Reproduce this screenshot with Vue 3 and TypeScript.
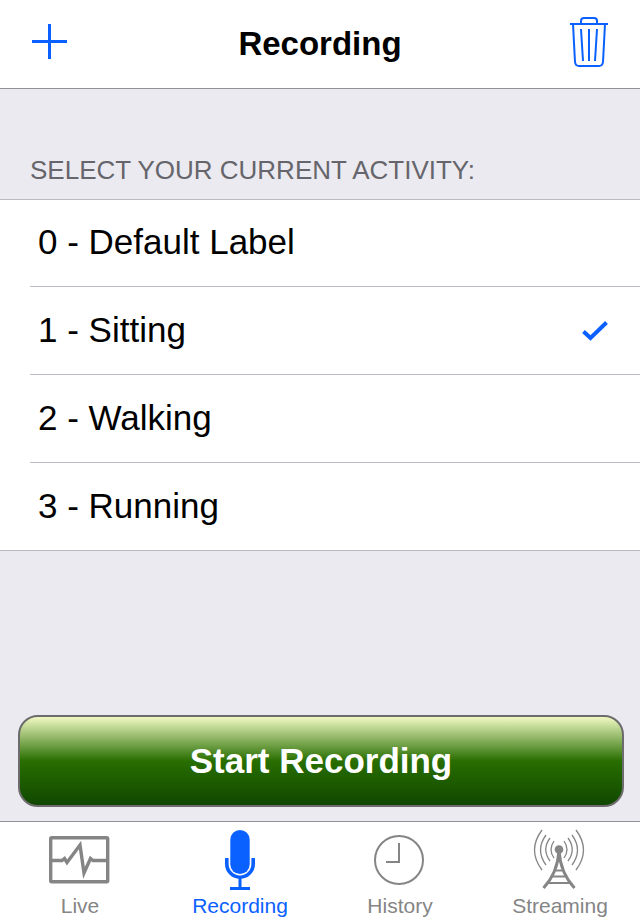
<script setup lang="ts">
import { ref } from 'vue'

const activities: string[] = ['Default Label', 'Sitting', 'Walking', 'Running']
const selected = ref<number>(1)

const tabs: string[] = ['Live', 'Recording', 'History', 'Streaming']
const activeTab = ref<string>('Recording')
</script>

<template>
  <div class="screen">
    <header class="navbar">
      <button class="nav-button" type="button" aria-label="Add activity">
        <svg width="36" height="36" viewBox="0 0 36 36">
          <path d="M0 17.5H35M17.5 0V35" fill="none" stroke="currentColor" stroke-width="3" />
        </svg>
      </button>
      <h1 class="title">Recording</h1>
      <button class="nav-button" type="button" aria-label="Delete recordings">
        <svg width="38" height="52" viewBox="0 0 38 52" fill="none" stroke="currentColor" stroke-width="2">
          <path d="M0 8H38" />
          <path d="M11 8V5Q11 2 14 2H24Q27 2 27 5V8" />
          <path d="M3 8L5 46Q5.500 50 9 50H29Q32.500 50 33 46L35 8" />
          <path d="M11 13L13 45M19 13V45M27 13L25 45" />
        </svg>
      </button>
    </header>

    <main class="content">
      <fieldset class="group">
        <legend class="group-title">SELECT YOUR CURRENT ACTIVITY:</legend>
        <div class="list">
          <label v-for="(name, index) in activities" :key="name" class="row">
            <span class="row-body">
              <input v-model="selected" class="radio" type="radio" name="activity" :value="index" />
              <span class="row-text">{{ index }} - {{ name }}</span>
              <svg v-if="selected === index" class="check" width="26" height="22" viewBox="0 0 26 22">
                <path d="M1.500 11.500L8.500 18L24.500 2.500" fill="none" stroke="currentColor" stroke-width="4" />
              </svg>
            </span>
          </label>
        </div>
      </fieldset>
      <button class="start" type="button">Start Recording</button>
    </main>

    <nav class="tabbar">
      <a
        v-for="tab in tabs"
        :key="tab"
        href="#"
        class="tab"
        :class="{ active: tab === activeTab }"
        @click.prevent="activeTab = tab"
      >
        <svg v-if="tab === 'Live'" width="62" height="62" viewBox="0 0 62 62" fill="none" stroke="currentColor">
          <rect x="1.700" y="8.700" width="57" height="44" rx="1" stroke-width="3.400" />
          <path
            d="M3 31.500H13L15.500 29.500L18 33.500L31 16L35 44L41.500 29.500L44 31.500H57"
            stroke-width="3.400"
            stroke-miterlimit="8"
          />
        </svg>
        <svg v-else-if="tab === 'Recording'" width="62" height="62" viewBox="0 0 62 62">
          <rect x="21.300" y="1" width="19.400" height="44" rx="9.700" fill="currentColor" />
          <path d="M17.800 29V35A13.200 13.200 0 0 0 44.200 35V29" fill="none" stroke="currentColor" stroke-width="3.600" />
          <path d="M31 48V60M21 59.500H41" fill="none" stroke="currentColor" stroke-width="3" />
        </svg>
        <svg v-else-if="tab === 'History'" width="62" height="62" viewBox="0 0 62 62" fill="none" stroke="currentColor" stroke-width="2">
          <circle cx="30" cy="31" r="24" />
          <path d="M30 14V33H17" />
        </svg>
        <svg v-else width="62" height="62" viewBox="0 0 62 62" fill="none" stroke="currentColor">
          <circle cx="30" cy="20.500" r="4.300" fill="currentColor" stroke="none" />
          <path
            stroke-width="1.300"
            d="M25 12Q19 20.500 25 29M21 9Q12.500 20.500 21 32M17 6Q6 21 17 36M13 1Q-2 21 13 41M35 12Q41 20.500 35 29M39 9Q47.500 20.500 39 32M43 6Q54 21 43 36M47 1Q62 21 47 41"
          />
          <path d="M30 22Q28.500 44 14.500 59M30 22Q31.500 44 45.500 59" stroke-width="3" />
          <path d="M27 41.500H33M24 47.500H36M20 54H40" stroke-width="2" />
        </svg>
        <span class="tab-label">{{ tab }}</span>
      </a>
    </nav>
  </div>
</template>

<style>
body {
  margin: 0;
}
</style>

<style scoped>
.screen {
  display: flex;
  flex-direction: column;
  min-height: 100vh;
  background: #ebeaf0;
  color: #000;
  font-family: "Liberation Sans", Arial, sans-serif;
}

.navbar {
  display: flex;
  align-items: center;
  justify-content: space-between;
  height: 88px;
  padding: 0 32px;
  background: #fff;
  border-bottom: 1px solid #929196;
}

.nav-button {
  display: flex;
  align-items: center;
  width: 38px;
  height: 84px;
  padding: 0;
  border: 0;
  background: none;
  color: #0b61ff;
  align-self: flex-start;
}

.title {
  margin: 0;
  font-size: 33px;
  font-weight: 700;
  line-height: 40px;
}

.content {
  display: flex;
  flex: 1;
  flex-direction: column;
  justify-content: space-between;
}

.group {
  min-width: 0;
  margin: 0;
  padding: 0;
  border: 0;
}

.group-title {
  padding: 66px 30px 14px;
  color: #66656b;
  font-size: 26px;
  line-height: 30px;
}

.list {
  background: #fff;
  border-top: 1px solid #bcbac1;
  border-bottom: 1px solid #bcbac1;
}

.row {
  display: block;
  padding-left: 30px;
}

.row-body {
  display: flex;
  align-items: center;
  height: 87px;
  padding: 0 32px 0 8px;
  border-bottom: 1px solid #bcbac1;
}

.row:first-child .row-body {
  height: 86px;
}

.row:last-child .row-body {
  border-bottom: 0;
}

.radio {
  width: 0;
  height: 0;
  margin: 0;
  appearance: none;
}

.row-text {
  flex: 1;
  padding-bottom: 2px;
  font-size: 35px;
  line-height: 40px;
}

.check {
  color: #0b61ff;
}

.start {
  height: 92px;
  margin: 0 16px 14px 18px;
  padding: 0;
  border: 2px solid #6c6c6c;
  border-radius: 20px;
  background: linear-gradient(#f0f9c3, #286e00 50%, #104700);
  color: #fff;
  font-family: inherit;
  font-size: 35px;
  font-weight: 700;
  line-height: 44px;
}

.tabbar {
  display: grid;
  grid-template-columns: repeat(4, 1fr);
  height: 98px;
  background: #fff;
  border-top: 1px solid #929196;
}

.tab {
  display: flex;
  flex-direction: column;
  align-items: center;
  padding-top: 7px;
  color: #858585;
  text-decoration: none;
}

.tab.active {
  color: #0b61ff;
}

.tab-label {
  margin-top: 3px;
  font-size: 21px;
  line-height: 24px;
}
</style>
